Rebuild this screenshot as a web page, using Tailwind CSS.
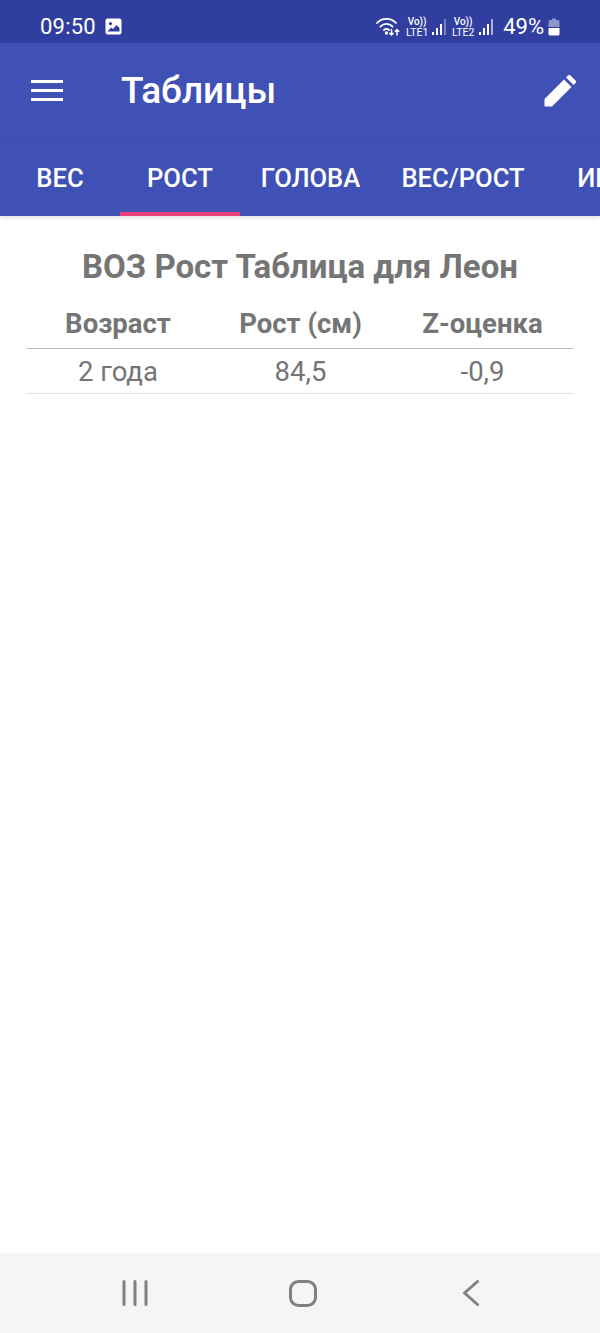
<!DOCTYPE html>
<html lang="ru">
<head>
    <meta charset="UTF-8">
    <meta name="viewport" content="width=device-width, initial-scale=1.0">
    <title>Таблицы</title>
    <script src="https://cdn.jsdelivr.net/npm/@tailwindcss/browser@4"></script>
</head>
<body class="font-['Roboto',sans-serif] bg-white">
<div class="flex flex-col h-[1333px] w-[600px] overflow-hidden">

    <!-- status bar -->
    <div class="flex items-center h-[43px] bg-[#303f9f] text-white pt-[10px] pl-[40px] pr-[40px] shrink-0">
        <span class="text-[22px] leading-none tracking-[0.2px]">09:50</span>
        <svg class="ml-[9px]" width="17" height="17" viewBox="0 0 17 17">
            <path fill="#fff" fill-rule="evenodd" d="M2.500 0.500h12a2 2 0 0 1 2 2v12a2 2 0 0 1-2 2h-12a2 2 0 0 1-2-2v-12a2 2 0 0 1 2-2zM5.500 4a1.600 1.600 0 1 0 0 3.200a1.600 1.600 0 0 0 0-3.200zM2.500 13.500h12v-3.500l-3-3l-3.500 4l-2-1.500z"/>
        </svg>
        <div class="ml-auto flex items-center">
            <svg width="24" height="19" viewBox="0 0 24 19" fill="none" stroke="#fff" stroke-width="1.800" stroke-linecap="round">
                <path d="M1 6C6 0.500 15 0.500 20 6"/>
                <path d="M4.500 9.500C8 6 13 6 16.500 9.500"/>
                <path d="M8 13C9.500 11.500 11.500 11.500 13 13"/>
                <circle cx="10.500" cy="16" r="0.800" fill="#fff"/>
                <path stroke-width="1.500" d="M15.500 12.500v5.500M13.800 16.300l1.700 1.700l1.700-1.700"/>
                <path stroke-width="1.500" d="M21 18v-5.500M19.300 14.200l1.700-1.700l1.700 1.700"/>
            </svg>
            <div class="ml-[6px] flex flex-col items-center leading-[11px] w-[22px]">
                <span class="text-[10px] font-medium">Vo))</span><span class="text-[10.500px]">LTE1</span>
            </div>
            <svg class="ml-[4px]" width="16" height="18" viewBox="0 0 16 18">
                <rect x="0" y="14" width="2" height="3" fill="#fff"/>
                <rect x="4" y="10" width="2" height="7" fill="#fff"/>
                <rect x="8" y="6" width="2" height="11" fill="#fff"/>
                <rect x="12" y="1" width="2" height="16" fill="#fff" opacity="0.35"/>
            </svg>
            <div class="ml-[4px] flex flex-col items-center leading-[11px] w-[22px]">
                <span class="text-[10px] font-medium">Vo))</span><span class="text-[10.500px]">LTE2</span>
            </div>
            <svg class="ml-[5px]" width="16" height="18" viewBox="0 0 16 18">
                <rect x="0" y="14" width="2" height="3" fill="#fff"/>
                <rect x="4" y="10" width="2" height="7" fill="#fff"/>
                <rect x="8" y="6" width="2" height="11" fill="#fff"/>
                <rect x="12" y="1" width="2" height="16" fill="#fff" opacity="0.6"/>
            </svg>
            <span class="ml-[8px] text-[22px] leading-none">49%</span>
            <svg class="ml-[4px]" width="12" height="18" viewBox="0 0 12 18">
                <path fill="#fff" opacity="0.45" d="M4 0.500h4v1.500h2a1.500 1.500 0 0 1 1.500 1.500v5.500h-11v-5.500a1.500 1.500 0 0 1 1.500-1.500h2z"/>
                <path fill="#fff" d="M0.500 10h11v6a1.500 1.500 0 0 1-1.500 1.500h-8a1.500 1.500 0 0 1-1.500-1.500z"/>
            </svg>
        </div>
    </div>

    <!-- toolbar -->
    <div class="flex items-center h-[95px] bg-[#3f51b5] text-white pl-[31px] pr-[24px] shrink-0">
        <svg class="mb-[1px]" width="32" height="21" viewBox="0 0 32 21">
            <rect x="0" y="0" width="32" height="3" fill="#fff"/>
            <rect x="0" y="9" width="32" height="3" fill="#fff"/>
            <rect x="0" y="18" width="32" height="3" fill="#fff"/>
        </svg>
        <h1 class="ml-[58px] text-[37px] font-medium leading-none">Таблицы</h1>
        <svg class="ml-auto" width="32" height="32" viewBox="0 0 32 32">
            <path fill="#fff" d="M0.500 31.500v-7.500L20 4.500l7.500 7.500L8 31.500z"/>
            <path fill="#fff" d="M22 2.500l2-2a1.800 1.800 0 0 1 2.500 0l5 5a1.800 1.800 0 0 1 0 2.500l-2 2z"/>
        </svg>
    </div>

    <!-- tabs -->
    <div class="flex h-[78px] bg-[#3f51b5] text-white text-[25.600px] font-medium shrink-0 overflow-hidden shadow-[0_2px_4px_rgba(0,0,0,0.12)] relative">
        <div class="w-[120px] shrink-0 flex items-center justify-center pt-[2px]">ВЕС</div>
        <div class="w-[120px] shrink-0 flex items-center justify-center pt-[2px] relative">РОСТ
            <div class="absolute left-0 right-0 bottom-0 h-[4px] bg-[#ec407a]"></div>
        </div>
        <div class="w-[141px] shrink-0 flex items-center justify-center pt-[2px]">ГОЛОВА</div>
        <div class="w-[164px] shrink-0 flex items-center justify-center pt-[2px]">ВЕС/РОСТ</div>
        <div class="w-[120px] shrink-0 flex items-center justify-center pt-[2px]">ИМТ</div>
    </div>

    <!-- table -->
    <div class="flex-1 px-[27px] text-[#757575]">
        <h2 class="mt-[32px] text-center text-[33px] font-bold leading-[38px]">ВОЗ Рост Таблица для Леон</h2>
        <div class="grid grid-cols-[182px_183px_181px] mt-[15px] text-[27.500px] font-bold border-b border-[#bdbdbd] h-[48px] pb-[1px] items-center text-center">
            <span>Возраст</span>
            <span>Рост (см)</span>
            <span>Z-оценка</span>
        </div>
        <div class="grid grid-cols-[182px_183px_181px] text-[27.500px] border-b border-[#e0e0e0] h-[45px] pt-[2px] items-center text-center">
            <span>2 года</span>
            <span>84,5</span>
            <span>-0,9</span>
        </div>
    </div>

    <!-- navigation bar -->
    <div class="flex items-center justify-center h-[80px] bg-[#f5f5f5] shrink-0">
        <div class="grid grid-cols-3 w-[504px] ml-[6px] justify-items-center items-center">
            <svg width="26" height="26" viewBox="0 0 26 26" fill="none" stroke="#808080" stroke-width="3" stroke-linecap="round">
                <path d="M2 1.500v23M13 1.500v23M24 1.500v23"/>
            </svg>
            <svg width="28" height="27" viewBox="0 0 28 27" fill="none" stroke="#808080" stroke-width="3">
                <rect x="1.500" y="1.500" width="25" height="24" rx="8"/>
            </svg>
            <svg width="18" height="26" viewBox="0 0 18 26" fill="none" stroke="#808080" stroke-width="3" stroke-linecap="round" stroke-linejoin="round">
                <path d="M15.500 1.500L2.500 13l13 11.500"/>
            </svg>
        </div>
    </div>

</div>
</body>
</html>
